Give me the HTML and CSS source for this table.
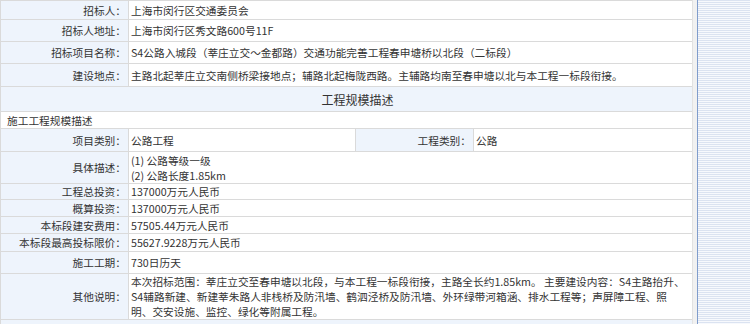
FILE: index.html
```html
<!DOCTYPE html>
<html lang="zh-CN">
<head>
<meta charset="utf-8">
<link rel="stylesheet" href="styles.css">
</head>
<body>
<div class="page">
  <div class="main">
    <table class="info">
      <colgroup>
        <col class="c1"><col class="c2"><col class="c3"><col class="c4">
      </colgroup>
      <tr class="h19"><td class="lab">招标人：</td><td class="val" colspan="3">上海市闵行区交通委员会</td></tr>
      <tr class="h22"><td class="lab">招标人地址：</td><td class="val" colspan="3">上海市闵行区秀文路600号11F</td></tr>
      <tr class="h22"><td class="lab">招标项目名称：</td><td class="val" colspan="3">S4公路入城段（莘庄立交～金都路）交通功能完善工程春申塘桥以北段（二标段）</td></tr>
      <tr class="h23"><td class="lab">建设地点：</td><td class="val" colspan="3">主路北起莘庄立交南侧桥梁接地点；辅路北起梅陇西路。主辅路均南至春申塘以北与本工程一标段衔接。</td></tr>
      <tr class="h25"><td class="head" colspan="4">工程规模描述</td></tr>
      <tr class="h17"><td class="sub" colspan="4">施工工程规模描述</td></tr>
      <tr class="h23"><td class="lab">项目类别：</td><td class="val">公路工程</td><td class="lab">工程类别：</td><td class="val">公路</td></tr>
      <tr class="h32"><td class="lab">具体描述：</td><td class="val multi" colspan="3">(1) 公路等级一级<br>(2) 公路长度1.85km</td></tr>
      <tr class="h16"><td class="lab">工程总投资：</td><td class="val" colspan="3">137000万元人民币</td></tr>
      <tr class="h17"><td class="lab">概算投资：</td><td class="val" colspan="3">137000万元人民币</td></tr>
      <tr class="h17"><td class="lab">本标段建安费用：</td><td class="val" colspan="3">57505.44万元人民币</td></tr>
      <tr class="h18"><td class="lab">本标段最高投标限价：</td><td class="val" colspan="3">55627.9228万元人民币</td></tr>
      <tr class="h22"><td class="lab">施工工期：</td><td class="val" colspan="3">730日历天</td></tr>
      <tr class="h45"><td class="lab">其他说明：</td><td class="val multi" colspan="3">本次招标范围：莘庄立交至春申塘以北段，与本工程一标段衔接，主路全长约1.85km。 主要建设内容：S4主路抬升、S4辅路新建、新建莘朱路人非栈桥及防汛墙、鹤泗泾桥及防汛墙、外环绿带河箱涵、排水工程等；声屏障工程、照明、交安设施、监控、绿化等附属工程。</td></tr>
      <tr class="h20"><td class="foot" colspan="4"></td></tr>
    </table>
  </div>
  <div class="gutter"></div>
  <div class="side"></div>
</div>
</body>
</html>
```

FILE: styles.css
```css
html, body {
  margin: 0;
  padding: 0;
  background: #ffffff;
}
body {
  font-family: "Microsoft YaHei", "Noto Sans CJK SC", "Noto Sans", sans-serif;
  font-size: 10.7px;
  color: #333333;
  overflow: hidden;
}
.page {
  display: flex;
  width: 750px;
  height: 324px;
  overflow: hidden;
}
.main {
  width: 692px;
  flex: 0 0 692px;
}
.gutter {
  flex: 0 0 5px;
  background: #f1f1f1;
  border-left: 1px solid #e2e2e2;
  box-sizing: border-box;
}
.side {
  flex: 1;
  border-left: 1px solid #7f9ccc;
  background: repeating-linear-gradient(to bottom, #dbe3f1 0, #dbe3f1 1px, #f7f9fd 1px, #f7f9fd 2px);
}
.info {
  width: 692px;
  border-collapse: collapse;
  table-layout: fixed;
}
.c1 { width: 128px; }
.c2 { width: 227px; }
.c3 { width: 118px; }
.c4 { width: 219px; }
.info td {
  border: 1px solid #dadada;
  padding: 0;
  vertical-align: middle;
  line-height: 15px;
}
.info td.lab {
  background: #eef4fc;
  text-align: right;
  padding-right: 2px;
  white-space: nowrap;
}
.info td.val {
  background: #ffffff;
  padding-left: 2px;
  padding-right: 6px;
}
.info td.head {
  background: #eef4fc;
  text-align: center;
  font-size: 12px;
  padding-left: 22px;
}
.info td.sub {
  background: #ffffff;
  padding-left: 6px;
}
.info td.foot {
  background: #eef4fc;
}
.h16 { height: 16px; }
.h17 { height: 17px; }
.h18 { height: 18px; }
.h19 { height: 19px; }
.h20 { height: 20px; }
.h22 { height: 22px; }
.h23 { height: 23px; }
.h25 { height: 25px; }
.h32 { height: 32px; }
.h45 { height: 45px; }
```
